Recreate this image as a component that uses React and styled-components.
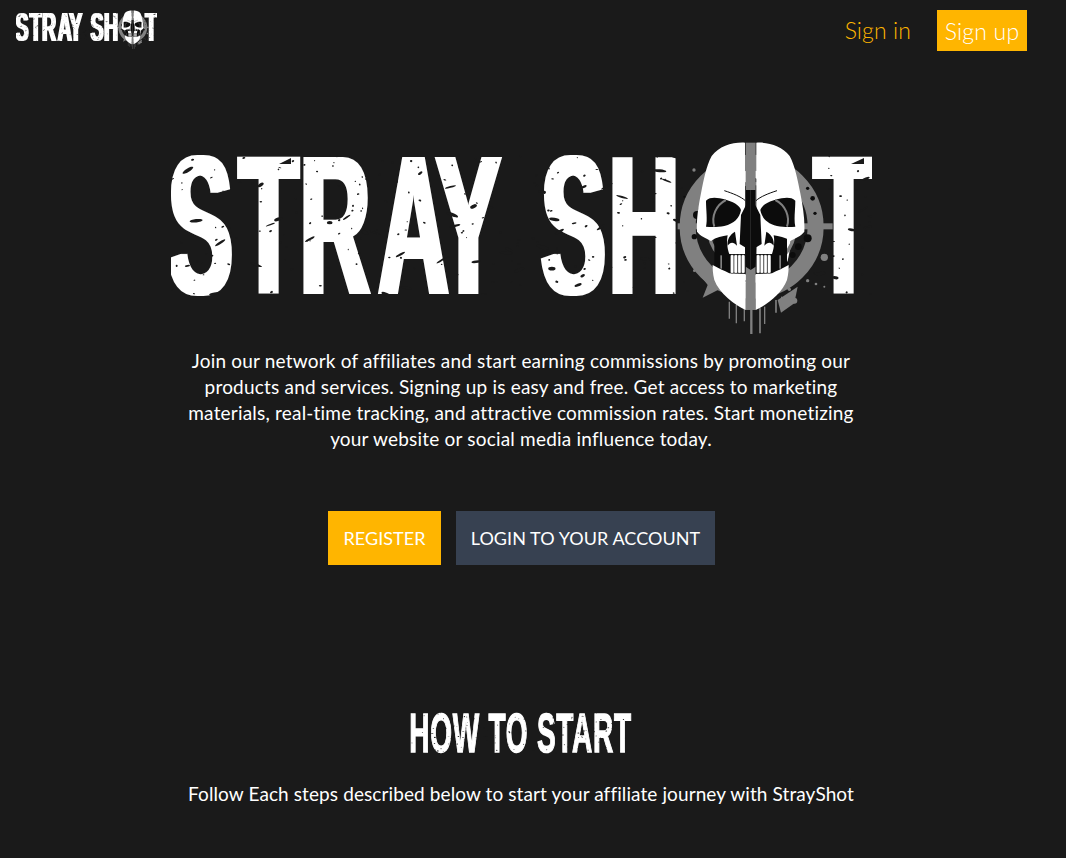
import styled, { createGlobalStyle } from "styled-components";

const GlobalStyle = createGlobalStyle`
  html, body {
    margin: 0;
    background: #1a1a1a;
  }
  * {
    box-sizing: border-box;
  }
`;

// small seeded generator so the distress marks stay the same on each render
const makeRandom = (seed) => () => {
  seed = (seed + 0x6d2b79f5) | 0;
  let t = Math.imul(seed ^ (seed >>> 15), 1 | seed);
  t = (t + Math.imul(t ^ (t >>> 7), 61 | t)) ^ t;
  return ((t ^ (t >>> 14)) >>> 0) / 4294967296;
};

const makeSpecks = (seed, count, width, height, top, big) => {
  const rand = makeRandom(seed);
  return Array.from({ length: count }, () => {
    const large = rand() < 0.2;
    return {
      x: rand() * width,
      y: top + rand() * height,
      rx: large ? big * (0.5 + rand()) : 0.5 + rand() * 1.1,
      ry: large ? big * (0.16 + rand() * 0.25) : 0.5 + rand() * 0.6,
      angle: -35 + rand() * 60,
    };
  });
};

// one glyph x for each character of "STRAY SHOT", the O sits behind the skull
const LOGO_SCALE = 0.49;
const logoGlyphX = [-3, 68, 129, 207.5, 265, 330, 370, 438, 546, 643]
  .map((x) => (x / LOGO_SCALE).toFixed(1))
  .join(" ");

const logoSpecks = makeSpecks(7, 340, 701, 142, 15, 4.5);
const titleSpecks = makeSpecks(21, 170, 220, 42, 0, 1.6);

const toothX = [208, 219, 230, 241];
const dripLines = [
  [205, 515, 566, 4],
  [226, 525, 580, 4],
  [250, 535, 574, 4],
  [271, 540, 612, 7],
  [297, 535, 610, 5],
  [311, 530, 582, 4],
  [345, 510, 548, 5],
  [362, 500, 536, 4],
];
const splatDots = [
  [99, 120, 5],
  [490, 382, 11],
  [400, 512, 9],
  [440, 452, 5],
  [465, 462, 4],
  [490, 470, 3],
  [95, 380, 6],
  [100, 422, 4],
  [385, 478, 5],
];
const ringMarks = [
  [455, 205, 7],
  [440, 175, 5],
  [462, 250, 5],
  [100, 320, 8],
  [70, 200, 3],
  [440, 325, 12],
  [412, 350, 10],
  [395, 375, 9],
  [375, 400, 7],
  [108, 255, 12],
];

const SkullHalf = () => (
  <g>
    <path
      fill="#fff"
      d="M252 38 C215 36 175 48 152 78 C135 110 128 150 120 190 C112 230 106 270 108 305 C118 318 135 325 150 333 C165 322 185 318 200 316 C196 335 200 360 205 372 L252 372 Z"
    />
    <path
      fill="#fff"
      d="M155 405 C172 415 190 422 205 430 L254 432 L254 540 C220 525 175 490 160 450 C155 430 155 415 155 405 Z"
    />
    <path
      fill="#0c0c0c"
      d="M135 212 C150 198 175 205 190 208 C215 215 235 225 240 240 C235 265 220 280 190 288 C170 292 150 292 135 290 C140 270 135 240 135 212 Z"
    />
    <path fill="none" stroke="#808080" strokeWidth="6" d="M160 290 C150 260 165 225 195 210" />
    <path fill="none" stroke="#0c0c0c" strokeWidth="3" d="M190 182 C215 190 240 200 253 212" />
    <path fill="#0c0c0c" d="M222 305 C205 315 198 330 200 347 C208 335 218 335 228 347 Z" />
    <path
      fill="#0c0c0c"
      d="M269 180 L255 180 L255 225 L240 255 L236 342 L252 352 L254 410 L269 420 Z"
    />
    {toothX.map((x) => (
      <rect key={x} x={x} y="374" width="11" height="56" rx="4" fill="#fff" stroke="#0c0c0c" strokeWidth="1.5" />
    ))}
    <rect x="178" y="376" width="5" height="40" fill="#808080" />
  </g>
);

const Logo = ({ width }) => (
  <LogoSvg viewBox="0 0 701 195" $width={width} role="img" aria-label="Stray Shot">
    <defs>
      <filter id="logo-widen" x="-2%" y="-2%" width="104%" height="104%">
        <feMorphology operator="dilate" radius="2.5 0" />
      </filter>
    </defs>
    <g filter="url(#logo-widen)">
      <LogoWord x={logoGlyphX} y="154" transform={`scale(${LOGO_SCALE} 1)`}>
        STRAY SHOT
      </LogoWord>
    </g>
    {logoSpecks.map((s, i) => (
      <ellipse
        key={i}
        cx={s.x}
        cy={s.y}
        rx={s.rx}
        ry={s.ry}
        fill="#1a1a1a"
        transform={`rotate(${s.angle} ${s.x} ${s.y})`}
      />
    ))}
    <polygon points="108,24 120,18 120,24" fill="#1a1a1a" />
    <polygon points="680,24 693,18 693,24" fill="#1a1a1a" />
    <g transform="translate(490 -10) scale(0.3333)">
      <circle cx="272" cy="290" r="192" fill="none" stroke="#808080" strokeWidth="48" />
      <circle cx="272" cy="290" r="130" fill="none" stroke="#808080" strokeWidth="10" />
      <rect x="50" y="280" width="70" height="18" fill="#808080" />
      <rect x="425" y="280" width="90" height="18" fill="#808080" />
      <polygon points="110,425 165,440 190,470 125,503 140,465" fill="#808080" />
      <polygon points="350,510 410,470 400,520 360,548" fill="#808080" />
      {splatDots.map(([x, y, r]) => (
        <circle key={x + y} cx={x} cy={y} r={r} fill="#808080" />
      ))}
      {ringMarks.map(([x, y, r]) => (
        <circle key={x + y} cx={x} cy={y} r={r} fill="#0c0c0c" />
      ))}
      {dripLines.map(([x, y1, y2, w]) => (
        <line key={x} x1={x} y1={y1} x2={x} y2={y2} stroke="#808080" strokeWidth={w} />
      ))}
      <rect x="160" y="300" width="218" height="135" fill="#0c0c0c" />
      <rect x="254" y="38" width="30" height="502" fill="#808080" />
      <SkullHalf />
      <g transform="translate(538 0) scale(-1 1)">
        <SkullHalf />
      </g>
    </g>
  </LogoSvg>
);

const App = () => {
  return (
    <Page>
      <GlobalStyle />
      <Header>
        <Logo width={141} />
        <Nav>
          <SignIn href="#">Sign in</SignIn>
          <SignUp href="#">Sign up</SignUp>
        </Nav>
      </Header>
      <Hero>
        <Logo width={701} />
        <Intro>
          Join our network of affiliates and start earning commissions by promoting our products and
          services. Signing up is easy and free. Get access to marketing materials, real-time tracking,
          and attractive commission rates. Start monetizing your website or social media influence today.
        </Intro>
        <Actions>
          <ActionButton href="#" $primary>
            REGISTER
          </ActionButton>
          <ActionButton href="#">LOGIN TO YOUR ACCOUNT</ActionButton>
        </Actions>
      </Hero>
      <HowTo>
        <TitleWrap>
          <Title>HOW TO START</Title>
          <TitleMarks viewBox="0 0 220 42" aria-hidden="true">
            {titleSpecks.map((s, i) => (
              <ellipse key={i} cx={s.x} cy={s.y} rx={s.rx * 0.6} ry={s.ry * 0.6} fill="#1a1a1a" />
            ))}
          </TitleMarks>
        </TitleWrap>
        <Subtitle>Follow Each steps described below to start your affiliate journey with StrayShot</Subtitle>
      </HowTo>
    </Page>
  );
};

export default App;

const Page = styled.div`
  width: 1042px;
  min-height: 858px;
  color: #fff;
  font-family: "Lato", "Open Sans", sans-serif;
`;

const Header = styled.header`
  display: flex;
  align-items: flex-start;
  justify-content: space-between;
  padding: 10px 15px 0 16px;
  height: 60px;
`;

const LogoSvg = styled.svg`
  display: block;
  width: ${(props) => props.$width}px;
  flex: none;
`;

const LogoWord = styled.text`
  font-family: "Liberation Sans", Arial, sans-serif;
  font-weight: 700;
  font-size: 198px;
  fill: #fff;
`;

const Nav = styled.nav`
  display: flex;
  align-items: center;
  gap: 26px;
  font-size: 23px;
  font-weight: 300;
`;

const SignIn = styled.a`
  color: #ffb500;
  text-decoration: none;
  letter-spacing: 0.1px;
  margin-top: -1px;
`;

const SignUp = styled.a`
  display: flex;
  align-items: center;
  justify-content: center;
  width: 90px;
  height: 41px;
  background: #ffb500;
  color: #fff;
  text-decoration: none;
  letter-spacing: 0.2px;
`;

const Hero = styled.section`
  display: flex;
  flex-direction: column;
  align-items: center;
  padding-top: 80px;
`;

const Intro = styled.p`
  width: 672px;
  margin: 13px 0 0;
  font-size: 19px;
  line-height: 26px;
  text-align: center;
  color: #fff;
  letter-spacing: 0.2px;
`;

const Actions = styled.div`
  display: flex;
  gap: 15px;
  margin: 59px 0 0 1px;
`;

const ActionButton = styled.a`
  display: flex;
  align-items: center;
  justify-content: center;
  width: ${(props) => (props.$primary ? "113px" : "259px")};
  height: 54px;
  font-size: 18px;
  color: #fff;
  letter-spacing: 0.06px;
  text-decoration: none;
  background: ${(props) => (props.$primary ? "#ffb500" : "#374151")};
`;

const HowTo = styled.section`
  display: flex;
  flex-direction: column;
  align-items: center;
  margin-top: 147px;
`;

const TitleWrap = styled.div`
  position: relative;
  width: 220px;
  height: 42px;
  display: flex;
  justify-content: center;
`;

const Title = styled.h2`
  margin: 0;
  font-family: "Liberation Sans", Arial, sans-serif;
  font-weight: 700;
  font-size: 56px;
  line-height: 42px;
  letter-spacing: 1.5px;
  white-space: nowrap;
  color: #fff;
  -webkit-text-stroke: 1.5px #fff;
  transform: scaleX(0.5);
`;

const TitleMarks = styled.svg`
  position: absolute;
  inset: 0;
  width: 100%;
  height: 100%;
`;

const Subtitle = styled.p`
  margin: 27px 0 0;
  font-size: 19px;
  line-height: 26px;
  letter-spacing: 0.1px;
  text-align: center;
`;
